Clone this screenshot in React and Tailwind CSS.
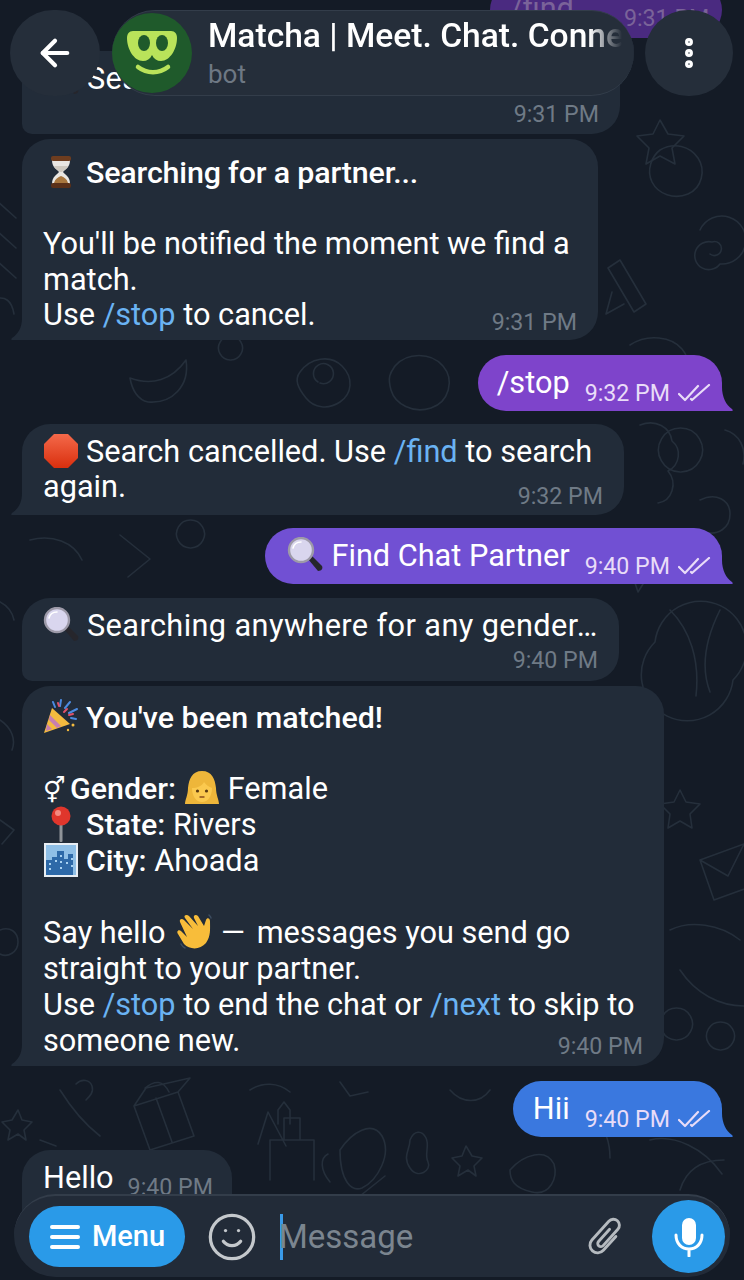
import { ArrowLeft, EllipsisVertical, Smile } from 'lucide-react';

const doodles = [
  // top right corner
  'M660 150c14-8 30-4 38 8s4 30-10 36-30 0-36-12 0-26 8-32z',
  'M700 230a24 24 0 1 1 20 34 14 14 0 1 1-8-22 7 7 0 1 1-2 12',
  'M620 260l26 44-12 8-26-44z M612 292l-6 22 18-10',
  'M660 120l8 14 16 2-12 12 3 16-15-8-14 8 3-16-12-12 16-2z',
  'M630 345c18-12 42-8 52 4s6 26-8 30',
  // row under bubble 2
  'M130 378c22 8 42 2 56-18 4 26-14 44-38 42-10-2-16-12-18-24z',
  'M300 372c10-14 30-18 42-6s10 28-2 36-26 6-34-4-12-18-6-26z M318 382a10 10 0 1 1 2 1',
  'M395 366c12-14 36-14 48 0s6 36-12 42-36-4-40-18 0-18 4-24z',
  'M230 360a12 12 0 1 1 1 0',
  // right of cancelled bubble
  'M640 425c16-6 30 2 32 16 10 8 8 24-4 30 10 12 4 30-10 32',
  'M680 472a22 22 0 1 1 1 0 M700 500c16-8 30 0 30 14s-12 22-26 18',
  'M632 540l14 12 18-6-8 18 12 14-20-2-10 16-6-18-18-6 16-10z',
  'M725 430c14 4 22 18 18 34',
  // left of find bubble
  'M30 540c22-6 44 2 52 20 M120 535l30 24-22 18 M190 548a14 14 0 1 1 1 0',
  // balloon right
  'M655 642a46 46 0 1 1 78 38 46 46 0 1 1-78-38z M670 610c20 20 30 50 26 86 M720 610c-14 28-20 56-10 82',
  'M680 790l6 12 14 2-10 10 2 14-12-7-12 7 2-14-10-10 14-2z',
  'M700 860l44-16 14 40-44 16z M700 860l28 16 16-32',
  'M670 930c20-10 50-6 70 10 M680 970c16 24 40 36 64 36',
  'M676 1040a16 16 0 1 1 1 0 M720 1050a14 14 0 1 1 1 0',
  // strip on the left
  'M-8 300c14-6 20 2 22 14 M-4 600c10 4 16 10 18 20 M0 720c12 8 16 20 12 30 M0 820l14 10-12 14',
  'M-4 200l20 18 M-4 230l20 18 M-4 260l20 18',
  'M0 930c10-4 18 2 18 12s-10 16-18 12',
  // lower area
  'M134 1106l44-14 16 44-44 14z M134 1106l12-18 44-10-12 14 M156 1098l16 44 M145 1088c10-8 18-8 24 4',
  'M60 1090c10 16 22 32 40 46 M76 1084c6-6 14-4 16 2s-2 10-6 14 M40 1140l16 6',
  'M18 1110l4 10 10 2-8 8 2 10-8-6-10 6 2-10-8-8 10-2z',
  'M258 1144l10-32 18 34 M278 1124v-14l6-8 6 8v14 M270 1180v-40h44v40 M284 1140v-22h16v22',
  'M340 1150c12-18 32-30 42-14 10 18-4 44-20 52-10 4-22-6-22-38z M330 1182c-10-12-10-24-2-28 M355 1200l30-24',
  'M410 1140c4-10 12-10 16-2s-2 16 2 24-10 18-18 6 0-18 0-28z',
  'M466 1146l6 10 10 2-8 8 2 10-8-6-10 6 2-10-8-8 10-2z',
  'M510 1170c14-16 36-22 44-6 4 14-4 32-22 28s-22-12-22-22z M560 1100c30 6 50 26 50 58',
  'M650 1140c24-6 54 8 72 34 M680 1190c6-20 20-30 44-30',
  'M250 1090c12-8 28-8 40 2 M340 1082l10 14 18-4 M450 1090c12 14 30 14 40 0',
];

function Ticks({ className }) {
  return (
    <svg className={className} width="33" height="18" viewBox="0 0 33 18" fill="none" stroke="currentColor" strokeWidth="2.2" strokeLinecap="round" strokeLinejoin="round">
      <path d="M1 10l6 6L20 2" />
      <path d="M13 15l1 1L31 1" />
    </svg>
  );
}

// negative margins keep the emoji from stretching the line box
const emojiClass = 'inline-block align-[1px] -my-2 mr-[7px]';

function Hourglass() {
  return (
    <svg className={emojiClass} width="36" height="36" viewBox="0 0 36 36">
      <path d="M9 6h18c0 8-5 9-7 12 2 3 7 4 7 12H9c0-8 5-9 7-12-2-3-7-4-7-12z" fill="#e9e6e2" />
      <path d="M11 12h14c-1 3-4 4-6 6h-2c-2-2-5-3-6-6z" fill="#cfc9c0" />
      <path d="M11 29c1-4 4-6 7-7 3 1 6 3 7 7z" fill="#a8763e" />
      <rect x="8" y="2" width="20" height="5" rx="2" fill="#6e3d1f" />
      <rect x="8" y="29" width="20" height="5" rx="2" fill="#5a3019" />
    </svg>
  );
}

function StopSign() {
  return (
    <svg className={emojiClass} width="36" height="36" viewBox="0 0 36 36">
      <defs>
        <linearGradient id="stopFill" x1="0" y1="0" x2="0" y2="1">
          <stop offset="0" stopColor="#f4694a" />
          <stop offset="1" stopColor="#d92f0e" />
        </linearGradient>
      </defs>
      <path d="M11 1h14l10 10v14L25 35H11L1 25V11z" fill="url(#stopFill)" />
    </svg>
  );
}

function Magnifier() {
  return (
    <svg className="inline-block align-[1px] -my-2 mr-[8px]" width="36" height="36" viewBox="0 0 36 36">
      <path d="M21 22l4-3 10 10c1 2 0 5-4 5z" fill="#26262c" />
      <circle cx="14" cy="13" r="12" fill="#d9d6ee" stroke="#9d9aa8" strokeWidth="2.4" />
      <path d="M6 11c1-4 4-6 8-6" fill="none" stroke="#fff" strokeWidth="1.6" strokeLinecap="round" />
    </svg>
  );
}

function Popper() {
  return (
    <svg className={emojiClass} width="36" height="36" viewBox="0 0 36 36">
      <path d="M1 34l8-25 18 16z" fill="#f4bb3f" />
      <path d="M4 25l5 5-6 2zM7 16l11 11-4 2-8-8z" fill="#c77fb0" />
      <path d="M10 3l2 5M18 1l-1 6M27 3l-5 6M34 10l-8 4M33 20l-5-1" stroke="#4c8be0" strokeWidth="2" strokeLinecap="round" />
      <path d="M15 4l1 3M24 10l-3 3M30 15l-4 1" stroke="#e0526a" strokeWidth="2" strokeLinecap="round" />
      <circle cx="30" cy="26" r="1.5" fill="#f4bb3f" />
      <circle cx="25" cy="31" r="1.2" fill="#f4bb3f" />
    </svg>
  );
}

function Woman() {
  return (
    <svg className="inline-block align-[1px] -my-2 mr-[8px]" width="36" height="36" viewBox="0 0 36 36">
      <path d="M18 1C8 1 5 9 4 18c0 7-3 12-3 16h34c0-4-3-9-3-16-1-9-4-17-14-17z" fill="#eeb63a" />
      <path d="M8 18c5 0 10-2 12-6 2 3 5 5 8 6 0 8-4 14-10 14S8 26 8 18z" fill="#fbc94f" />
      <circle cx="13.5" cy="21" r="1.6" fill="#5b3a12" />
      <circle cx="22.5" cy="21" r="1.6" fill="#5b3a12" />
      <path d="M16 27h4" stroke="#8a4b1c" strokeWidth="1.4" strokeLinecap="round" />
    </svg>
  );
}

function Pin() {
  return (
    <svg className={emojiClass} width="36" height="36" viewBox="0 0 36 36">
      <rect x="16.5" y="14" width="3" height="22" rx="1" fill="#8f9499" />
      <circle cx="18" cy="10" r="9.5" fill="#e0362c" />
      <circle cx="15" cy="7" r="3" fill="#f58a80" />
    </svg>
  );
}

function City() {
  return (
    <svg className={emojiClass} width="36" height="36" viewBox="0 0 36 36">
      <rect x="1" y="1" width="34" height="34" fill="#e8eef4" />
      <rect x="3" y="3" width="30" height="30" fill="#8fbfe6" />
      <path d="M3 33V18h6v-3h5V9h7v8h4v-5h5v21z" fill="#2d69a8" />
      <path d="M6 22h2M6 27h2M12 19h2M17 14h2M17 20h2M17 26h2M23 21h2M28 17h2M28 24h2" stroke="#a8d2f2" strokeWidth="2" />
    </svg>
  );
}

function Wave() {
  return (
    <svg className="inline-block align-[1px] -my-2 ml-[3px] mr-[7px]" width="38" height="36" viewBox="0 0 38 36">
      <path d="M4 8c-1-3 2-4 4-2l9 9-8-11c-2-3 2-4 4-2l9 10-4-8c-1-3 2-4 4-2l6 10 2-6c1-3 4-2 4 1 0 8 1 15-4 22-6 7-16 7-22 1L2 20c-2-3 1-5 3-3l6 6z" fill="#f8bd3a" />
      <path d="M5 30c1 2 2 3 4 4M33 1c1 1 2 2 2 3" stroke="#3c4c60" strokeWidth="1.5" fill="none" strokeLinecap="round" />
    </svg>
  );
}

function Gender() {
  return <span className="inline-block w-[27px] text-[25px] leading-none font-normal">⚥</span>;
}

function Cmd({ children }) {
  return <span className="text-[#6ab3f3]">{children}</span>;
}

function Bold({ children, className = '' }) {
  return <span className={`font-medium text-[30.4px] ${className}`}>{children}</span>;
}

function TailLeft({ color }) {
  return (
    <svg className={`absolute bottom-0 right-full ${color}`} width="11" height="22" viewBox="0 0 11 22" fill="currentColor">
      <path d="M11 0v22H1c-1 0-1-1 0-2 6-4 10-10 10-20z" />
    </svg>
  );
}

function TailRight({ color }) {
  return (
    <svg className={`absolute bottom-0 left-full ${color}`} width="11" height="24" viewBox="0 0 11 24" fill="currentColor">
      <path d="M0 0c0 10 4 18 10 22 1 1 1 2 0 2H0z" />
    </svg>
  );
}

function Incoming({ width, time, tail, className, timeClass, children }) {
  return (
    <div className={`relative ml-[22px] bg-[#222c39] rounded-[28px] px-[21px] text-white ${width} ${className} ${tail ? 'rounded-bl-none' : 'rounded-bl-[10px]'}`}>
      {tail && <TailLeft color="text-[#222c39]" />}
      <div>{children}</div>
      <div className={`flex justify-end h-[28px] items-center text-[23.2px] tracking-normal text-[#6f7a86] ${timeClass}`}>{time}</div>
    </div>
  );
}

function Outgoing({ bg, tailColor, time, text, className }) {
  return (
    <div className={`relative self-end mr-[22px] h-[56px] rounded-[28px] rounded-br-none flex justify-end pr-[11px] text-white whitespace-nowrap ${bg} ${className}`}>
      <TailRight color={tailColor} />
      <div className="pt-[10px]">{text}</div>
      <div className="ml-[15px] pt-[24px] flex items-start text-[23.2px] leading-[28px] text-[#e9dcf8]">
        {time}
        <Ticks className="ml-[8px] mt-[5px] text-[#e9dcf8]" />
      </div>
    </div>
  );
}

export default function App() {
  return (
    <div className="relative w-[744px] h-[1280px] overflow-hidden bg-[#141b26] text-[30.7px] leading-[35.5px]" style={{ fontFamily: 'Roboto, "DejaVu Sans", sans-serif' }}>
      {/* wallpaper */}
      <svg className="absolute inset-0" width="744" height="1280" fill="none" stroke="#252f3b" strokeWidth="1.6" strokeLinecap="round" strokeLinejoin="round">
        {doodles.map((d, i) => (
          <path key={i} d={d} />
        ))}
      </svg>

      {/* messages */}
      <div className="relative flex flex-col -mt-[18px]">
        <div className="self-end mr-[22px] w-[232px] h-[56px] rounded-[28px] bg-[#4a2a80] text-[#7a6399] flex pl-[20px] pt-[9px]">
          /find
          <span className="ml-[50px] pt-[13px] text-[23.2px] leading-[28px]">9:31 PM</span>
        </div>

        <Incoming width="w-[598px]" className="mt-[13px] h-[83px] pt-[10px] whitespace-nowrap tracking-[0.4px]" timeClass="mt-[4px]" time="9:31 PM">
          <Magnifier />Searching anywhere for any gender…
        </Incoming>

        <Incoming width="w-[576px]" tail className="mt-[5px] pt-[16px] pb-[3px]" timeClass="-mt-[24px]" time="9:31 PM">
          <Hourglass /><Bold className="tracking-[-0.16px]">Searching for a partner...</Bold>
          <br />
          <br />
          You'll be notified the moment we find a match.
          <br />
          Use <Cmd>/stop</Cmd> to cancel.
        </Incoming>

        <Outgoing bg="bg-[#7e44cb]" tailColor="text-[#7e44cb]" className="mt-[15px] w-[244px]" text="/stop" time="9:32 PM" />

        <Incoming width="w-[602px]" tail className="mt-[13px] pt-[10px] pb-[4px]" timeClass="-mt-[22px]" time="9:32 PM">
          <StopSign />Search cancelled. Use <Cmd>/find</Cmd> to search again.
        </Incoming>

        <Outgoing
          bg="bg-[#7150d3]"
          tailColor="text-[#7150d3]"
          className="mt-[13px] w-[457px]"
          time="9:40 PM"
          text={<><Magnifier />Find Chat Partner</>}
        />

        <Incoming width="w-[597px]" className="mt-[14px] h-[83px] pt-[10px] whitespace-nowrap tracking-[0.4px]" timeClass="mt-[4px]" time="9:40 PM">
          <Magnifier />Searching anywhere for any gender…
        </Incoming>

        <Incoming width="w-[642px]" tail className="mt-[5px] h-[380px] pt-[14px] leading-[35.9px]" timeClass="-mt-[26px]" time="9:40 PM">
          <Popper /><Bold>You've been matched!</Bold>
          <br />
          <br />
          <Gender /><Bold>Gender:</Bold> <Woman />Female
          <br />
          <Pin /><Bold>State:</Bold> Rivers
          <br />
          <City /><Bold>City:</Bold> Ahoada
          <br />
          <br />
          Say hello <Wave /><span className="mr-[4px]">—</span> messages you send go straight to your partner.
          <br />
          Use <Cmd>/stop</Cmd> to end the chat or <Cmd>/next</Cmd> to skip to someone new.
        </Incoming>

        <Outgoing bg="bg-[#3a78df]" tailColor="text-[#3a78df]" className="mt-[15px] w-[209px]" text="Hii" time="9:40 PM" />

        <div className="ml-[22px] mt-[13px] w-[210px] h-[90px] bg-[#222c39] rounded-[28px] flex pl-[21px] pt-[10px] text-white">
          Hello
          <span className="ml-[14px] pt-[13px] text-[23.2px] leading-[28px] text-[#6f7a86]">9:40 PM</span>
        </div>
      </div>

      {/* header */}
      <div className="absolute top-[10px] left-[10px] right-[11px] flex items-center">
        <div className="w-[90px] h-[86px] rounded-full bg-[#252e3a] flex items-center justify-center">
          <ArrowLeft size={42} color="#fff" strokeWidth={2.4} />
        </div>
        <div className="relative ml-[12px] w-[522px] h-[86px] rounded-[43px] bg-[#252e3a] border-t border-b border-[#333d4a] flex items-center">
          <div className="w-[80px] h-[80px] rounded-full bg-[#1f5a2b] flex items-center justify-center shrink-0">
            <svg width="50" height="50" viewBox="0 0 50 50">
              <path d="M6 3h38c4 0 6 3 6 7 0 11-7 23-16 23-4 0-7-2-9-6-2 4-5 6-9 6C7 33 0 21 0 10c0-4 2-7 6-7z" fill="#b9e35a" />
              <ellipse cx="17" cy="15" rx="6" ry="8" fill="#1f5a2b" />
              <ellipse cx="35" cy="15" rx="6" ry="8" fill="#1f5a2b" />
              <path d="M11 39c9 7 21 7 30 0" fill="none" stroke="#b9e35a" strokeWidth="4.5" strokeLinecap="round" />
            </svg>
          </div>
          <div className="ml-[16px] flex-1 min-w-0 pr-[12px]">
            <div className="text-[33.6px] leading-[38px] font-medium text-white whitespace-nowrap overflow-hidden [mask-image:linear-gradient(to_right,black_92%,transparent)]">
              Matcha | Meet. Chat. Connect
            </div>
            <div className="text-[26px] leading-[32px] mt-[3px] text-[#6e7884]">bot</div>
          </div>
        </div>
        <div className="ml-[11px] w-[88px] h-[86px] rounded-full bg-[#252e3a] flex items-center justify-center">
          <EllipsisVertical size={38} color="#fff" strokeWidth={3} />
        </div>
      </div>

      {/* input bar */}
      <div className="absolute left-[14px] top-[1194px] w-[716px] h-[83px] rounded-[42px] bg-[#222b38] border-t-2 border-[#333d4a] flex items-center pl-[15px] pr-[5px] text-[#7b858f]">
        <div className="w-[156px] h-[61px] rounded-full bg-[#2a9ae8] text-white flex items-center justify-center gap-[11px] text-[29px] font-medium">
          <svg width="32" height="26" viewBox="0 0 32 26" stroke="#fff" strokeWidth="4" strokeLinecap="round">
            <path d="M3 3h26M3 13h26M3 23h26" />
          </svg>
          Menu
        </div>
        <Smile className="ml-[21px]" size={52} color="#c4c8cc" strokeWidth={1.5} />
        <div className="ml-[22px] w-[3px] h-[46px] bg-[#3a9ae8]" />
        <span className="-ml-[4px] text-[33px]">Message</span>
        <svg className="ml-auto" width="44" height="44" viewBox="0 0 40 40" fill="none" stroke="#b5babf" strokeWidth="2.6" strokeLinecap="round">
          <g transform="rotate(42 20 20)">
            <path d="M27 13v17a7 7 0 0 1-14 0V7a5.5 5.5 0 0 1 11 0v20a2.8 2.8 0 0 1-5.6 0V12" />
          </g>
        </svg>
        <div className="ml-[25px] w-[73px] h-[73px] rounded-full bg-[#2a9ae8] flex items-center justify-center">
          <svg width="30" height="40" viewBox="0 0 30 40" fill="none">
            <rect x="8" y="1" width="14" height="27" rx="7" fill="#fff" />
            <path d="M2 18c0 9 6 14 13 14s13-5 13-14M15 32v7" stroke="#fff" strokeWidth="3" strokeLinecap="round" />
          </svg>
        </div>
      </div>
    </div>
  );
}
